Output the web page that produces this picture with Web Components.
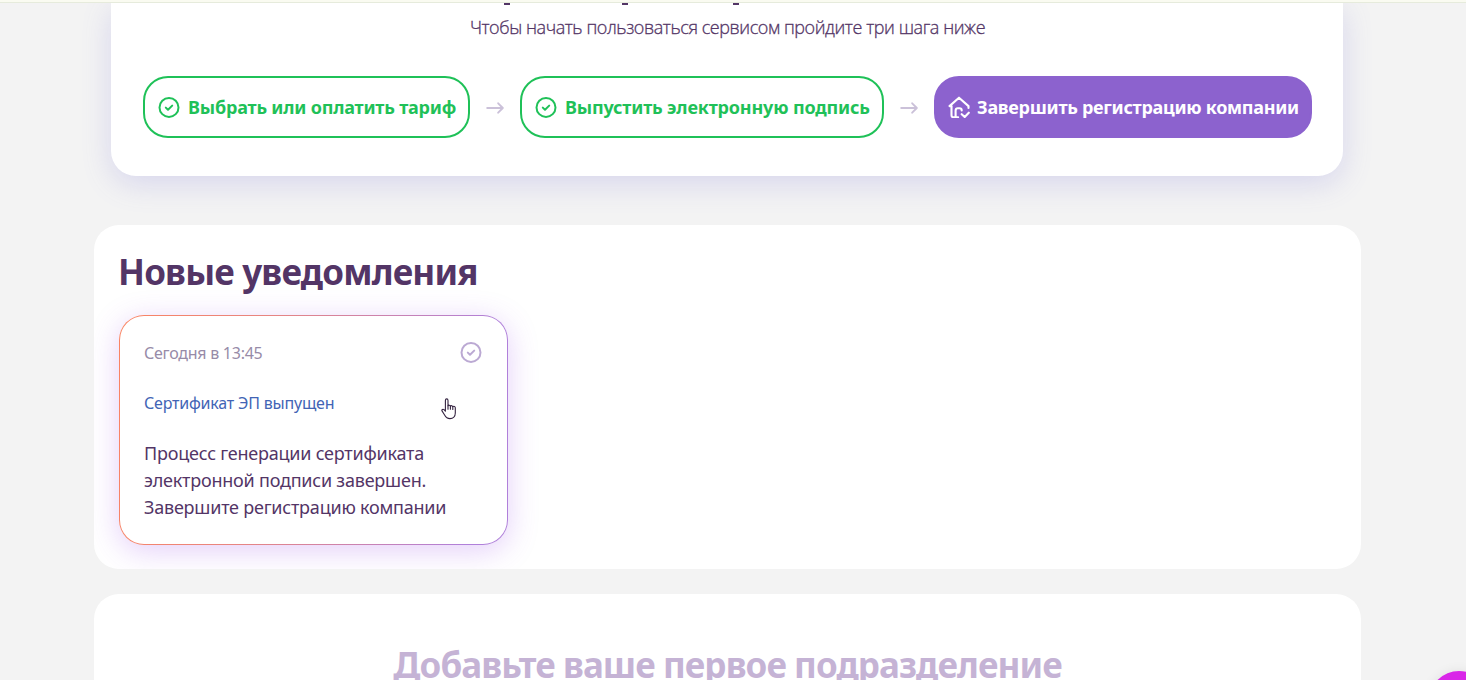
<!DOCTYPE html>
<html lang="ru">
<head>
<meta charset="utf-8">
<title>Уведомления</title>
<style>
  html, body {
    margin: 0;
    height: 100%;
    overflow: hidden;
  }
  body {
    background: #f3f3f3;
    color: #533566;
    font-family: "Noto Sans", "Open Sans", sans-serif;
  }
</style>
</head>
<body>
<mi-page>
  <mi-welcome>
    <mi-step state="done" style="width:327px; --track:-0.2px">Выбрать или оплатить тариф</mi-step>
    <mi-arrow></mi-arrow>
    <mi-step state="done" style="width:364px; --track:-0.17px">Выпустить электронную подпись</mi-step>
    <mi-arrow></mi-arrow>
    <mi-step state="active" style="width:378px; --track:-0.28px">Завершить регистрацию компании</mi-step>
  </mi-welcome>
  <mi-news>
    <mi-notice>
      <span slot="date">Сегодня в 13:45</span>
      <span slot="title">Сертификат ЭП выпущен</span>
      Процесс генерации сертификата<br>электронной подписи завершен.<br>Завершите регистрацию компании
    </mi-notice>
  </mi-news>
  <mi-empty>Добавьте ваше первое подразделение</mi-empty>
</mi-page>

<script>
class Page extends HTMLElement {
  constructor() {
    super();
    this.attachShadow({mode: "open"});
  }

  connectedCallback() {
    this.shadowRoot.innerHTML = /*html*/ `
      <style>
        :host {
          display: flex;
          flex-direction: column;
          height: 680px;
          overflow: hidden;
          position: relative;
        }
        .line {
          height: 3px;
          flex: none;
          box-sizing: border-box;
          background: #fafbf1;
          border-bottom: 1px solid #e6ebdc;
          position: relative;
          z-index: 1;
        }
        main {
          width: 1267px;
          margin-left: 94px;
          display: flex;
          flex-direction: column;
        }
        .chat {
          position: absolute;
          left: 1429px;
          top: 671px;
          width: 60px;
          height: 60px;
          border-radius: 50%;
          background: #d926e8;
          box-shadow: 0 0 12px rgba(0, 0, 0, .08);
        }
      </style>
      <div class="line"></div>
      <main><slot></slot></main>
      <div class="chat"></div>`;
  }
}

class Welcome extends HTMLElement {
  constructor() {
    super();
    this.attachShadow({mode: "open"});
  }

  connectedCallback() {
    this.shadowRoot.innerHTML = /*html*/ `
      <style>
        :host {
          display: flex;
          flex-direction: column;
          box-sizing: border-box;
          height: 173px;
          margin: 0 18px 49px 17px;
          padding: 0 31px 0 32px;
          background: #fff;
          border-radius: 0 0 25px 25px;
          box-shadow: 0 8px 30px rgba(105, 100, 215, .2);
        }
        /* descenders of the heading that is scrolled away */
        .tails {
          display: flex;
          gap: 112px;
          height: 2px;
          padding-left: 361px;
        }
        .tails i {
          width: 6px;
          background: #533566;
        }
        .tails i:nth-child(2) {
          margin-right: -7px;
        }
        p {
          margin: 7px 0 0;
          height: 30px;
          line-height: 30px;
          text-align: center;
          white-space: nowrap;
          font-family: "Open Sans", "Noto Sans", sans-serif;
          font-size: 18px;
          font-weight: 300;
          letter-spacing: -.43px;
          -webkit-text-stroke: .3px currentColor;
        }
        .steps {
          display: flex;
          align-items: center;
          justify-content: space-between;
          margin-top: 34px;
        }
      </style>
      <div class="tails"><i></i><i></i><i></i></div>
      <p><span>Чтобы начать пользоваться сервисом пройдите три шага ниже</span></p>
      <div class="steps"><slot></slot></div>`;
  }
}

const check = /*html*/ `
  <svg width="22" height="22" viewBox="0 0 22 22" fill="none" stroke="currentColor" stroke-width="2" stroke-linecap="round" stroke-linejoin="round">
    <circle cx="11" cy="11.4" r="9.5"/>
    <path d="M7.8 11.6l2.2 2.1 4.2-4.1"/>
  </svg>`;

const house = /*html*/ `
  <svg width="22" height="22" viewBox="0 0 22 22" fill="none" stroke="currentColor" stroke-width="2.1" stroke-linecap="round" stroke-linejoin="round">
    <path d="M3.3 10.1H1.5L11 1.7l9.5 8.4v1.9"/>
    <path d="M3.5 10.2v9.1c0 1.1.7 1.9 1.8 1.9h4.8"/>
    <path d="M7.6 20.9v-6.2c0-1.5.8-2.4 2.3-2.4h1.6c1.5 0 2.2.8 2.2 2.1"/>
    <path d="M13.7 18.2l3 2.8 4.1-4.3"/>
  </svg>`;

class Step extends HTMLElement {
  constructor() {
    super();
    this.attachShadow({mode: "open"});
  }

  connectedCallback() {
    const active = this.getAttribute("state") === "active";
    this.shadowRoot.innerHTML = /*html*/ `
      <style>
        :host {
          display: flex;
          align-items: center;
          gap: 8px;
          box-sizing: border-box;
          height: 62px;
          padding-left: 13px;
          border: 2px solid #1fc158;
          border-radius: 25px;
          color: #1fc158;
          font-size: 18px;
          font-weight: 700;
          letter-spacing: var(--track);
          white-space: nowrap;
        }
        :host([state="active"]) {
          gap: 7px;
          padding-left: 12px;
          border-color: #8c62ce;
          background: #8c62ce;
          color: #fff;
        }
        svg {
          flex: none;
        }
      </style>
      ${active ? house : check}<span><slot></slot></span>`;
  }
}

class Arrow extends HTMLElement {
  constructor() {
    super();
    this.attachShadow({mode: "open"});
  }

  connectedCallback() {
    this.shadowRoot.innerHTML = /*html*/ `
      <style>
        :host {
          display: flex;
          color: #cbc1d9;
        }
      </style>
      <svg width="18" height="13" viewBox="0 0 18 13" fill="none" stroke="currentColor" stroke-width="1.9" stroke-linecap="round" stroke-linejoin="round">
        <path d="M1.2 7h15.4M12.2 2.3L16.8 7l-4.6 4.7"/>
      </svg>`;
  }
}

class News extends HTMLElement {
  constructor() {
    super();
    this.attachShadow({mode: "open"});
  }

  connectedCallback() {
    this.shadowRoot.innerHTML = /*html*/ `
      <style>
        :host {
          display: block;
          box-sizing: border-box;
          height: 344px;
          padding: 22px 25px 0;
          margin-bottom: 25px;
          background: #fff;
          border-radius: 25px;
          overflow: hidden;
        }
        h1 {
          margin: 0 0 18px -1px;
          height: 50px;
          line-height: 50px;
          font-size: 35px;
          letter-spacing: -.8px;
          white-space: nowrap;
        }
      </style>
      <h1>Новые уведомления</h1>
      <slot></slot>`;
  }
}

class Notice extends HTMLElement {
  constructor() {
    super();
    this.attachShadow({mode: "open"});
  }

  connectedCallback() {
    this.shadowRoot.innerHTML = /*html*/ `
      <style>
        :host {
          display: block;
          box-sizing: border-box;
          width: 389px;
          height: 230px;
          padding: 25px 25px 0 24px;
          border: 1px solid transparent;
          border-radius: 25px;
          background:
            linear-gradient(#fff, #fff) padding-box,
            linear-gradient(98deg, #fa8462 0%, #e88580 35%, #b080da 90%) border-box;
          box-shadow: 0 6px 30px rgba(150, 70, 230, .26);
        }
        header {
          display: flex;
          justify-content: space-between;
          align-items: center;
          height: 24px;
          color: #978ba8;
          font-size: 16px;
          letter-spacing: -.25px;
        }
        header svg {
          color: #bba9d3;
          margin-top: -2px;
        }
        .title {
          margin-top: 26px;
          height: 24px;
          line-height: 24px;
          font-size: 16px;
          letter-spacing: -.2px;
          color: #4264b5;
          white-space: nowrap;
        }
        .text {
          margin-top: 25px;
          line-height: 27px;
          font-size: 18px;
          letter-spacing: -.22px;
          white-space: nowrap;
        }
        .hand {
          position: absolute;
          left: 441px;
          top: 398px;
        }
      </style>
      <header><slot name="date"></slot>${check}</header>
      <div class="title"><slot name="title"></slot></div>
      <div class="text"><slot></slot></div>
      <svg class="hand" width="16" height="22" viewBox="0 0 16 22" fill="#fff" stroke="#33223f" stroke-width="1.1" stroke-linejoin="round" stroke-linecap="round">
        <path d="M4.4 13.2V2.4c0-2 2.6-2 2.6 0v5.3c.4-.8 2.1-.7 2.4.4.6-.8 2.1-.5 2.4.5.9-.6 2.5-.2 2.5 1.2v5.1c0 3.4-2.2 5.7-5.3 5.7-2.8 0-4.2-1.4-5.4-3.6L1 12.9c-.6-1.4 1-2.2 2-1.2z"/>
        <path d="M7 7.7v3.5M9.4 8.1v3.1M11.8 8.6v2.8"/>
      </svg>`;
  }
}

class Empty extends HTMLElement {
  constructor() {
    super();
    this.attachShadow({mode: "open"});
  }

  connectedCallback() {
    this.shadowRoot.innerHTML = /*html*/ `
      <style>
        :host {
          display: block;
          box-sizing: border-box;
          height: 200px;
          padding-top: 46px;
          background: #fff;
          border-radius: 25px;
        }
        h2 {
          margin: 0;
          line-height: 50px;
          font-size: 35px;
          letter-spacing: -.92px;
          text-align: center;
          white-space: nowrap;
          color: #c5b3d5;
        }
      </style>
      <h2><slot></slot></h2>`;
  }
}

customElements.define("mi-page", Page);
customElements.define("mi-welcome", Welcome);
customElements.define("mi-step", Step);
customElements.define("mi-arrow", Arrow);
customElements.define("mi-news", News);
customElements.define("mi-notice", Notice);
customElements.define("mi-empty", Empty);
</script>
</body>
</html>
